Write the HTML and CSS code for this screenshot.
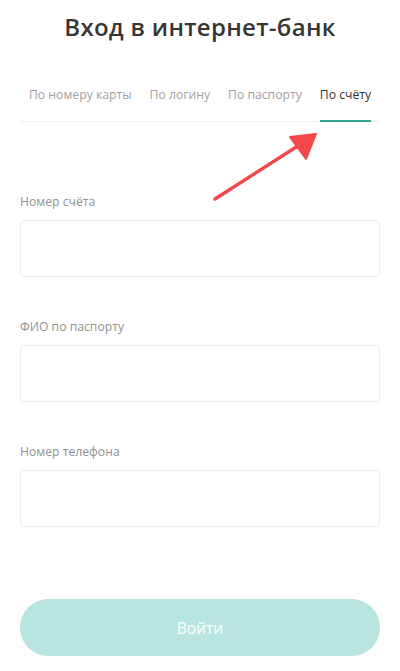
FILE: index.html
```html
<!DOCTYPE html>
<html lang="ru">
<head>
    <meta charset="UTF-8">
    <meta name="viewport" content="width=device-width, initial-scale=1.0">
    <title>Вход в интернет-банк</title>
    <link rel="stylesheet" href="styles.css">
</head>
<body>
    <div class="page">
        <h1 class="title">Вход в интернет-банк</h1>

        <div class="tabs">
            <span class="tab">По номеру карты</span>
            <span class="tab">По логину</span>
            <span class="tab">По паспорту</span>
            <span class="tab active">По счёту</span>
        </div>

        <form class="login-form">
            <label class="field">
                <span class="field-label">Номер счёта</span>
                <input class="field-input" type="text">
            </label>
            <label class="field">
                <span class="field-label">ФИО по паспорту</span>
                <input class="field-input" type="text">
            </label>
            <label class="field">
                <span class="field-label">Номер телефона</span>
                <input class="field-input" type="tel">
            </label>

            <button type="button" class="submit">Войти</button>
        </form>

        <!-- стрелка-подсказка поверх формы -->
        <svg class="hint-arrow" width="120" height="80" viewBox="0 0 120 80">
            <line x1="5" y1="75" x2="94" y2="18" stroke="#f2474b" stroke-width="3.5" stroke-linecap="round"/>
            <polygon points="106,10 80,13 96,35" fill="#f2474b" stroke="#f2474b" stroke-width="2" stroke-linejoin="round"/>
        </svg>
    </div>
</body>
</html>
```

FILE: styles.css
```css
body {
    margin: 0;
    padding: 0;
    background: #ffffff;
    font-family: "Open Sans", "Liberation Sans", sans-serif;
    color: #333333;
}

.page {
    position: relative;
    padding: 0 20px;
}

.title {
    margin: 0;
    padding-top: 10px;
    font-size: 24px;
    line-height: 34px;
    font-weight: 600;
    text-align: center;
    color: #363636;
    letter-spacing: 0.3px;
}

.tabs {
    display: flex;
    gap: 18px;
    margin-top: 42px;
    padding: 0 9px;
    border-bottom: 1px solid #eeeeee;
}

.tab {
    font-size: 12.2px;
    line-height: 18px;
    color: #9f9f9f;
    padding-bottom: 16px;
    border-bottom: 2px solid transparent;
    margin-bottom: -1px;
    white-space: nowrap;
}

.tab.active {
    color: #333333;
    border-bottom-color: #2ea58c;
}

.login-form {
    display: flex;
    flex-direction: column;
    margin-top: 71px;
}

.field {
    display: flex;
    flex-direction: column;
    margin-bottom: 41px;
}

.field-label {
    font-size: 12.2px;
    line-height: 18px;
    color: #929292;
    margin-bottom: 9px;
}

.field-input {
    box-sizing: border-box;
    height: 57px;
    width: 100%;
    border: 1px solid #ececec;
    border-radius: 4px;
    background: #ffffff;
    outline: none;
}

.submit {
    margin-top: 31px;
    height: 57px;
    border: none;
    border-radius: 29px;
    background: #b9e5e0;
    color: #ffffff;
    font-family: inherit;
    font-size: 15.5px;
}

.hint-arrow {
    position: absolute;
    left: 210px;
    top: 124px;
}
```
